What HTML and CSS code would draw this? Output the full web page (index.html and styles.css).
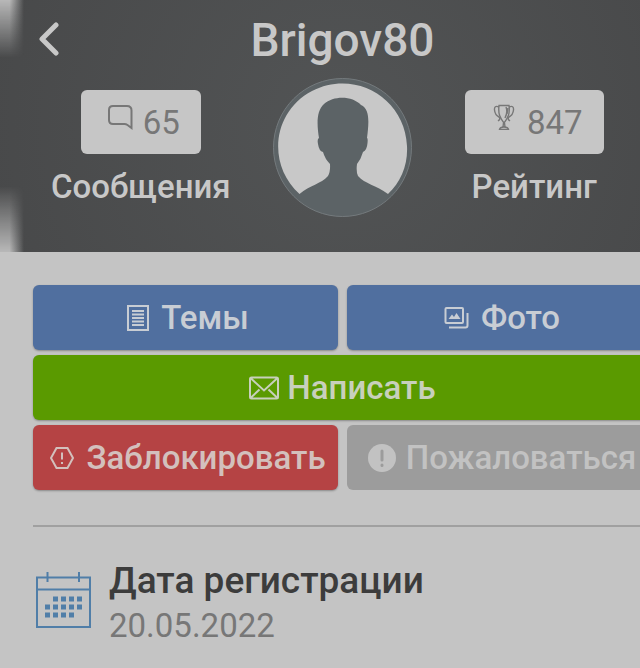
FILE: index.html
```html
<!DOCTYPE html>
<html lang="ru">

<head>
    <meta charset="UTF-8">
    <meta name="viewport" content="width=device-width, initial-scale=1.0">
    <title>Brigov80</title>
    <link rel="stylesheet" href="styles.css">
</head>

<body>
    <div class="page">
        <header class="profile-header">
            <div class="title-bar">
                <button class="back-btn" aria-label="Назад">
                    <svg width="22" height="34" viewBox="0 0 22 34">
                        <path d="M18 3 L4 17 L18 31" />
                    </svg>
                </button>
                <h1>Brigov80</h1>
            </div>
            <div class="stats">
                <div class="stat">
                    <button class="stat-btn" aria-labelledby="messages-label">
                        <svg class="stat-icon" width="26" height="26" viewBox="0 0 26 26">
                            <path class="stroke" d="M6 2 H20 Q24.500 2 24.500 6.500 V24 L20.500 21 Q19 20 17.500 20 H6 Q2 20 2 16 V6 Q2 2 6 2 Z" />
                        </svg>
                        <span>65</span>
                    </button>
                    <span class="stat-label" id="messages-label">Сообщения</span>
                </div>
                <svg class="avatar" width="139" height="139" viewBox="0 0 139 139">
                    <circle cx="69.500" cy="69.500" r="69" fill="#5c6366" stroke="#747a7d" />
                    <path fill="#c8c8c8" d="M26.500 116 C-6 87 -1 34 39 13 C82 -9 132 20 134 68 C135 87 128 104 115 116 C103 107 92 106 85 98 Q83 94 84 86 Q88 81 90 74 Q94 72 94.500 65 Q95 60 94 60 C96 44 97 31 88 27 C80 18 61 17 51 26 C43 33 44 48 46 60 Q44 61 45 66 Q46 73 50 74 Q52 81 57 86 Q57.500 94 55 98 C48 106 37 107 26.500 116 Z" />
                </svg>
                <div class="stat">
                    <button class="stat-btn" aria-labelledby="rating-label">
                        <svg class="stat-icon" width="26" height="26" viewBox="0 0 26 26">
                            <g class="stroke thin">
                                <path d="M8 1.500 H18 C19 10 17 14 13 19 C9 14 7 10 8 1.500 Z" />
                                <path d="M8 3 Q3 1 3.500 6 Q4 11 8 13 Q10 15 7 17 M18 3 Q23 1 22.500 6 Q22 11 18 13 Q16 15 19 17" />
                                <path d="M15 3 Q17 8 14 14 M17 4 L16 10 M12.500 19 L12 23 M13.500 19 L14 23 M8.500 25.500 Q9 23 13 23 Q17 23 17.500 25.500 Z" />
                            </g>
                        </svg>
                        <span>847</span>
                    </button>
                    <span class="stat-label" id="rating-label">Рейтинг</span>
                </div>
            </div>
        </header>

        <main>
            <div class="actions">
                <button class="btn blue">
                    <svg width="22" height="26" viewBox="0 0 22 26">
                        <path class="stroke" d="M1 1 H21 V25 H1 Z M5 6 H17 M5 9.500 H17 M5 13 H17 M5 16.500 H17 M5 20 H17" />
                    </svg>
                    Темы
                </button>
                <button class="btn blue">
                    <svg width="25" height="26" viewBox="0 0 25 26">
                        <path class="stroke" d="M2.500 3 H18 Q19 3 19 4 V17 Q19 18 18 18 H2.500 Q1.500 18 1.500 17 V4 Q1.500 3 2.500 3 Z M23.500 8 V20.500 Q23.500 22.500 21.500 22.500 H5" />
                        <path class="solid" d="M4.500 14 L8 9.500 L10 12 L12.500 8 L16.500 14 Z" />
                    </svg>
                    Фото
                </button>
                <button class="btn green">
                    <svg width="30" height="24" viewBox="0 0 30 24">
                        <path class="stroke" d="M2.500 1.500 H27.500 Q29 1.500 29 3 V21 Q29 22.500 27.500 22.500 H2.500 Q1 22.500 1 21 V3 Q1 1.500 2.500 1.500 Z M1.500 2 L15 14.500 L28.500 2 M1.500 22 L10.500 13.500 M28.500 22 L19.500 13.500" />
                    </svg>
                    Написать
                </button>
                <button class="btn red">
                    <svg width="24" height="24" viewBox="0 0 24 24">
                        <path class="stroke" d="M6.500 2 H17.500 L23 12 L17.500 22 H6.500 L1 12 Z M12 6.500 V13.500 M12 16 V18" />
                    </svg>
                    Заблокировать
                </button>
                <button class="btn gray" disabled>
                    <svg width="28" height="28" viewBox="0 0 28 28">
                        <circle class="solid" cx="14" cy="14" r="14" />
                        <path class="mark" d="M14 7 V16 M14 21 V21.500" />
                    </svg>
                    Пожаловаться
                </button>
            </div>

            <section class="info">
                <svg class="calendar" width="55" height="56" viewBox="0 0 55 56">
                    <path class="frame" d="M1 5.500 H54 V55 H1 Z M1 17.500 H54 M11.500 0 V10 M43 0 V10" />
                    <path class="days" d="M17 27 H46 M9 35 H46 M9 43 H38" />
                </svg>
                <div class="info-text">
                    <h2>Дата регистрации</h2>
                    <p>20.05.2022</p>
                </div>
            </section>
        </main>
    </div>
</body>

</html>
```

FILE: styles.css
```css
* {
    box-sizing: border-box;
}

body {
    margin: 0;
    background-color: #c4c4c4;
    font-family: Roboto, "Noto Sans", sans-serif;
    overflow: hidden;
}

/* the page is a bit wider than the screen */
.page {
    width: calc(100% + 45px);
}

h1,
h2,
p {
    margin: 0;
}

button {
    font-family: inherit;
    border: none;
    cursor: pointer;
}

svg {
    flex-shrink: 0;
    fill: none;
}

.stroke {
    stroke: currentColor;
    stroke-width: 2;
}

.thin {
    stroke-width: 1.4;
}

.solid {
    fill: currentColor;
}

.profile-header {
    position: relative;
    padding-bottom: 35px;
    color: #c8c8c8;
    background: radial-gradient(circle at 50% 50%, #525455, #48494a);
}

/* light spots on the left edge of the cover */
.profile-header::before {
    content: "";
    position: absolute;
    top: 0;
    bottom: 0;
    left: 0;
    width: 24px;
    background: linear-gradient(to right, #b8b8b8 40%, transparent);
    mask-image: linear-gradient(#000, transparent 58px, transparent calc(100% - 66px), #000);
}

.title-bar {
    display: grid;
    grid-template-columns: 60px 1fr 60px;
    align-items: center;
    height: 78px;
}

.title-bar h1 {
    font-size: 46px;
    font-weight: 500;
    line-height: 54px;
    text-align: center;
    padding-top: 2px;
}

.back-btn {
    display: flex;
    justify-content: flex-end;
    padding: 0;
    background: none;
    color: inherit;
}

.back-btn path {
    stroke: currentColor;
    stroke-width: 5;
    stroke-linecap: round;
    stroke-linejoin: round;
}

.stats {
    display: grid;
    grid-template-columns: 10fr 10fr 9fr;
    justify-items: center;
    padding: 0 60px 0 40px;
}

.stat {
    display: flex;
    flex-direction: column;
    align-items: center;
    gap: 12px;
    padding-top: 12px;
}

.stat-btn {
    display: flex;
    align-items: center;
    gap: 10px;
    height: 64px;
    padding: 0 21px 0 26px;
    border-radius: 6px;
    background-color: #c6c6c6;
    color: #777777;
    font-size: 33px;
}

.stat-icon {
    margin-bottom: 10px;
}

.stat-label {
    font-size: 33px;
    font-weight: 500;
    line-height: 42px;
}

main {
    padding: 33px;
}

.actions {
    display: grid;
    grid-template-columns: 1fr 1fr;
    gap: 5px 9px;
    padding-bottom: 35px;
    border-bottom: 2px solid #a0a0a0;
}

.btn {
    display: flex;
    justify-content: center;
    align-items: center;
    gap: 12px;
    height: 65px;
    padding: 0 0 0 5px;
    border-radius: 6px;
    box-shadow: 0 1px 2px rgba(0, 0, 0, 0.3);
    color: #c8cdd4;
    font-size: 33px;
    font-weight: 500;
    white-space: nowrap;
}

.blue {
    background-color: #506f9f;
}

.green {
    grid-column: 1 / -1;
    gap: 8px;
    padding: 0;
    background-color: #5a9a00;
    color: #c8d0bc;
}

.red {
    background-color: #b54344;
    color: #d3c0bd;
}

.gray {
    gap: 10px;
    background-color: #9c9c9c;
    box-shadow: none;
    color: #c2c2c2;
}

.mark {
    stroke: #9c9c9c;
    stroke-width: 3;
    stroke-linecap: round;
}

.info {
    display: flex;
    gap: 18px;
    padding: 31px 0 0 3px;
}

.calendar {
    margin-top: 14px;
}

.frame {
    stroke: #507ea8;
    stroke-width: 2;
}

.days {
    stroke: #507ea8;
    stroke-width: 5;
    stroke-dasharray: 5 3;
}

.info-text h2 {
    color: #3c3c3c;
    font-size: 37px;
    font-weight: 500;
    line-height: 45px;
}

.info-text p {
    color: #777777;
    font-size: 33px;
    line-height: 46px;
}
```
